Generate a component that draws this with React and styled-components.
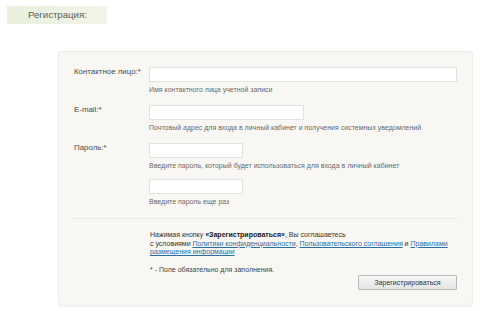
import React from 'react';
import styled, { createGlobalStyle } from 'styled-components';

const GlobalStyle = createGlobalStyle`
  html, body {
    margin: 0;
    padding: 0;
    background: #ffffff;
  }
  body {
    font-family: "Liberation Sans", Arial, sans-serif;
    color: #444;
  }
`;

const Page = styled.div`
  width: 480px;
  height: 311px;
  padding: 6px 0 0 7px;
  box-sizing: border-box;
  overflow: hidden;
`;

const TitleBox = styled.div`
  width: 100px;
  height: 18px;
  box-sizing: border-box;
  padding-left: 21px;
  background: linear-gradient(to right, #e9f0de, #f1f5ea);
  font-size: 9.6px;
  line-height: 18px;
  color: #5b5b5b;
`;

const Panel = styled.div`
  width: 415px;
  margin: 27px 0 0 51px;
  box-sizing: border-box;
  padding: 15px 15px 15px 15px;
  background: #f8f7f4;
  border: 1px solid #efeeea;
  border-radius: 3px;
  box-shadow: 0 1px 2px rgba(0, 0, 0, 0.05);
`;

const Row = styled.div`
  display: grid;
  grid-template-columns: 75px 1fr;
  margin-bottom: ${p => p.$gap || 10}px;
`;

const Label = styled.div`
  font-size: 7.9px;
  line-height: 10px;
  color: #4a4a4a;
`;

const Field = styled.div`
  display: flex;
  flex-direction: column;
  align-items: flex-start;
`;

const Input = styled.input`
  width: ${p => p.$w}px;
  height: 15px;
  box-sizing: border-box;
  margin: 0;
  padding: 0 3px;
  border: 1px solid #e3e2de;
  background: #ffffff;
  outline: none;
  font-family: inherit;
  font-size: 8px;
`;

const Hint = styled.div`
  margin-top: 3px;
  font-size: 7px;
  line-height: 10px;
  color: #6a6a6a;
`;

const Separator = styled.div`
  height: 1px;
  background: #ebe9e4;
  margin: 11px 0 12px -2px;
`;

const Bottom = styled.div`
  padding-left: 76px;
  display: flex;
  flex-direction: column;
`;

const Agreement = styled.div`
  font-size: 7px;
  line-height: 8.6px;
  color: #333;

  b {
    font-weight: bold;
    color: #222;
  }

  a {
    color: #2a6ea6;
    text-decoration: underline;
  }
`;

const Note = styled.div`
  margin-top: 8px;
  font-size: 7px;
  line-height: 10px;
  color: #444;
`;

const Button = styled.button`
  align-self: flex-end;
  width: 99px;
  height: 15px;
  margin: 0;
  padding: 0;
  box-sizing: border-box;
  border: 1px solid #b9b9b9;
  border-radius: 1px;
  background: linear-gradient(to bottom, #f7f7f7, #e4e4e4);
  font-family: inherit;
  font-size: 7px;
  color: #333;
  cursor: pointer;
`;

const App = () => {
  return (
    <>
      <GlobalStyle />
      <Page>
        <TitleBox>Регистрация:</TitleBox>
        <Panel>
          <Row>
            <Label>Контактное лицо:*</Label>
            <Field>
              <Input $w={308} type='text' />
              <Hint>Имя контактного лица учетной записи</Hint>
            </Field>
          </Row>
          <Row>
            <Label>E-mail:*</Label>
            <Field>
              <Input $w={155} type='text' />
              <Hint>Почтовый адрес для входа в личный кабинет и получения системных уведомлений</Hint>
            </Field>
          </Row>
          <Row $gap={8}>
            <Label>Пароль:*</Label>
            <Field>
              <Input $w={94} type='password' />
              <Hint>Введите пароль, который будет использоваться для входа в личный кабинет</Hint>
            </Field>
          </Row>
          <Row $gap={0}>
            <Label />
            <Field>
              <Input $w={94} type='password' />
              <Hint>Введите пароль еще раз</Hint>
            </Field>
          </Row>
          <Separator />
          <Bottom>
            <Agreement>
              Нажимая кнопку <b>«Зарегистрироваться»</b>, Вы соглашаетесь<br />
              с условиями <a href='#'>Политики конфиденциальности</a>, <a href='#'>Пользовательского соглашения</a> и <a href='#'>Правилами<br />размещения информации</a>
            </Agreement>
            <Note>* - Поле обязательно для заполнения.</Note>
            <Button type='button'>Зарегистрироваться</Button>
          </Bottom>
        </Panel>
      </Page>
    </>
  );
};

export default App;
